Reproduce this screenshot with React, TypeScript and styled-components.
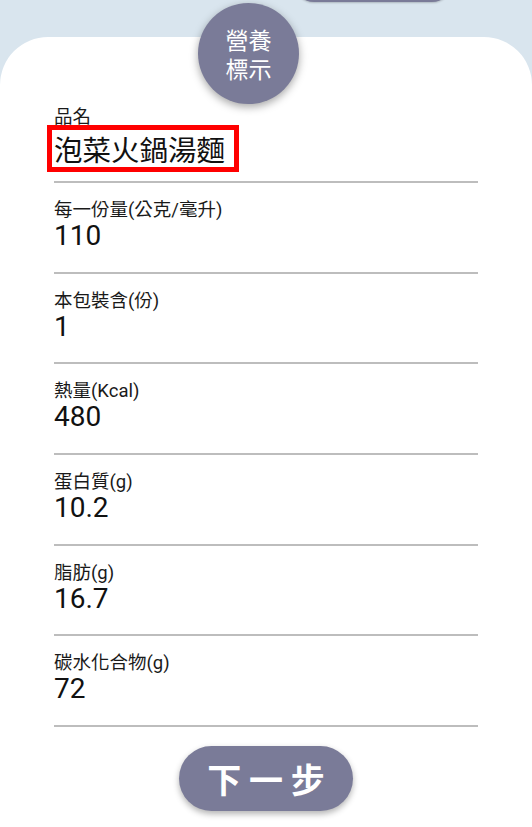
import styled, { createGlobalStyle } from "styled-components";

const GlobalStyle = createGlobalStyle`
  html, body {
    margin: 0;
    padding: 0;
    background: #d9e5ee;
    font-family: Roboto, "Noto Sans CJK TC", "Noto Sans", sans-serif;
  }
`;

interface Field {
  label: string;
  value: string;
  highlight?: boolean;
}

const fields: Field[] = [
  { label: "品名", value: "泡菜火鍋湯麵", highlight: true },
  { label: "每一份量(公克/毫升)", value: "110" },
  { label: "本包裝含(份)", value: "1" },
  { label: "熱量(Kcal)", value: "480" },
  { label: "蛋白質(g)", value: "10.2" },
  { label: "脂肪(g)", value: "16.7" },
  { label: "碳水化合物(g)", value: "72" },
];

export default function App() {
  return (
    <>
      <GlobalStyle />
      <Page>
        <Header>
          <TopTab />
        </Header>
        <Card>
          <Badge>
            <BadgeLine>營養</BadgeLine>
            <BadgeLine>標示</BadgeLine>
          </Badge>
          <List>
            {fields.map((f, i) => (
              <Row key={i} first={i === 0}>
                <Label>{f.label}</Label>
                <Value highlight={f.highlight}>{f.value}</Value>
              </Row>
            ))}
          </List>
          <Footer>
            <NextButton>下 一 步</NextButton>
          </Footer>
        </Card>
      </Page>
    </>
  );
}

const Page = styled.div`
  width: 532px;
  height: 827px;
  overflow: hidden;
  display: flex;
  flex-direction: column;
`;

const Header = styled.div`
  height: 37px;
  display: flex;
  justify-content: flex-start;
  padding-left: 294px;
`;

const TopTab = styled.div`
  width: 158px;
  height: 40px;
  margin-top: -38.5px;
  border-radius: 20px;
  background: #7a7b98;
  box-shadow: 0 1px 2px rgba(0, 0, 0, 0.2);
`;

const Card = styled.div`
  position: relative;
  flex: 1;
  background: #ffffff;
  border-radius: 48px 48px 0 0;
  padding: 0 54px;
  display: flex;
  flex-direction: column;
`;

const Badge = styled.div`
  position: absolute;
  top: -34px;
  left: 198px;
  width: 101px;
  height: 101px;
  border-radius: 50%;
  background: #7a7b98;
  box-shadow: 0 3px 8px rgba(0, 0, 0, 0.35);
  color: #ffffff;
  display: flex;
  flex-direction: column;
  align-items: center;
  justify-content: center;
  font-family: "Noto Sans CJK TC", sans-serif;
`;

const BadgeLine = styled.span`
  display: block;
  font-size: 23px;
  line-height: 29px;
`;

const List = styled.div`
  display: flex;
  flex-direction: column;
  padding-top: 69px;
`;

const Row = styled.div<{ first?: boolean }>`
  display: flex;
  flex-direction: column;
  align-items: flex-start;
  padding: ${(p) => (p.first ? "0 0 9px" : "16px 0 20.7px")};
  border-bottom: 2px solid #bdbdbd;
`;

const Label = styled.div`
  font-size: 18.5px;
  line-height: 22px;
  color: #1a1a1a;
`;

const Value = styled.div<{ highlight?: boolean }>`
  font-size: 28px;
  line-height: 30px;
  color: #111111;
  ${(p) =>
    p.highlight &&
    `
    margin: -3px 0 0 -7px;
    padding: 2px 9px 2px 2px;
    font-size: 28.5px;
    line-height: 33px;
    border: 5px solid #ff0000;
    font-family: "Noto Sans CJK TC", sans-serif;
    background: #ffffff;
  `}
`;

const Footer = styled.div`
  display: flex;
  justify-content: center;
  padding-top: 19px;
`;

const NextButton = styled.button`
  width: 174px;
  height: 65px;
  border: none;
  border-radius: 33px;
  background: #7a7b98;
  color: #ffffff;
  font-family: "Noto Sans CJK TC", sans-serif;
  font-size: 34px;
  font-weight: 700;
  box-shadow: 0 3px 6px rgba(0, 0, 0, 0.3);
  cursor: pointer;
`;
